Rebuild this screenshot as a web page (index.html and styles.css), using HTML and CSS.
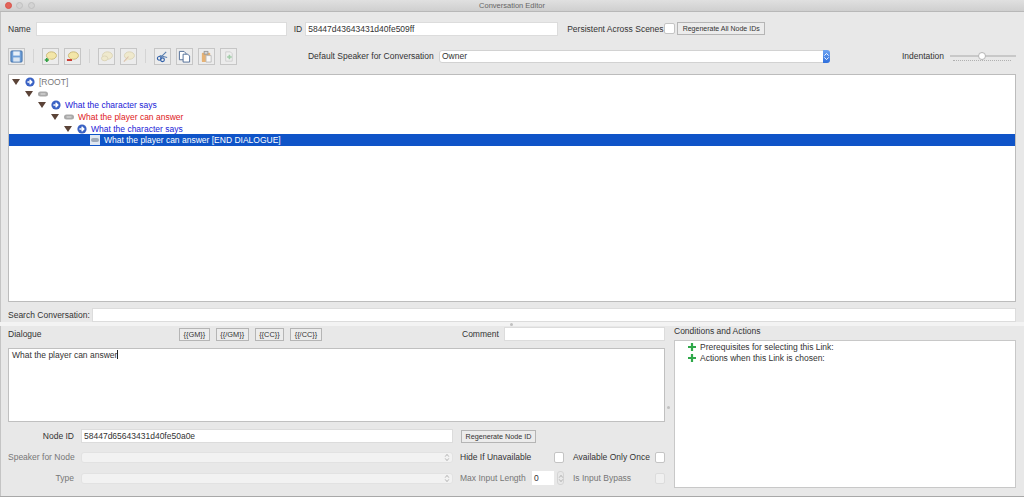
FILE: index.html
```html
<!DOCTYPE html>
<html lang="en">

<head>
    <meta charset="UTF-8">
    <title>Conversation Editor</title>
    <link rel="stylesheet" href="styles.css">
</head>

<body>
    <svg class="defs" width="0" height="0">
        <symbol id="go" viewBox="0 0 10 10">
            <circle cx="5" cy="5" r="4.6" fill="#3a62c4"/>
            <path d="M2.4 5h4M4.6 2.8 6.8 5 4.6 7.2" fill="none" stroke="#fff" stroke-width="1.4"/>
        </symbol>
        <symbol id="link" viewBox="0 0 10 10">
            <rect x="0" y="2.500" width="10" height="5" rx="2.500" fill="#a9a9a9"/>
            <path d="M2.500 5h5" stroke="#e4e4e4" stroke-width="1"/>
        </symbol>
        <symbol id="arrow" viewBox="0 0 8 6">
            <path d="M0 0h8L4 6z" fill="#5b4337"/>
        </symbol>
        <symbol id="plus" viewBox="0 0 8 8">
            <path d="M4 0v8M0 4h8" stroke="#2fa84a" stroke-width="2.2"/>
        </symbol>
        <symbol id="bubble" viewBox="0 0 14 14">
            <ellipse cx="8" cy="6" rx="5.4" ry="4" fill="#f3e6a8" stroke="#c9b878"/>
            <path d="M5 9 3.6 12 8 10z" fill="#f3e6a8"/>
        </symbol>
        <symbol id="updown" viewBox="0 0 6 10">
            <path d="M1 4 3 1.500 5 4M1 6 3 8.500 5 6" fill="none" stroke="#a5a5a5" stroke-width="0.900"/>
        </symbol>
    </svg>

    <header class="titlebar">
        <div class="lights"><span class="light close"></span><span class="light"></span><span class="light"></span></div>
        <div class="title">Conversation Editor</div>
    </header>

    <main class="editor">
        <div class="row-name">
            <label class="lbl-name">Name</label>
            <input class="field name-input" type="text">
            <label class="lbl-id">ID</label>
            <input class="field id-input" type="text" value="58447d43643431d40fe509ff">
            <label class="lbl-persist">Persistent Across Scenes</label>
            <span class="check"></span>
            <button class="btn btn-regen-all">Regenerate All Node IDs</button>
        </div>

        <div class="row-tools">
            <div class="tools">
                <button class="tool">
                    <svg viewBox="0 0 14 14"><rect x="1" y="1" width="12" height="12" rx="1" fill="#6f9fd8" stroke="#3f6da8"/><rect x="3.5" y="1.5" width="7" height="4.5" fill="#e9f0f8"/><rect x="3.5" y="8" width="7" height="4.5" fill="#dbe6f2"/></svg>
                </button>
                <span class="sep"></span>
                <button class="tool">
                    <svg viewBox="0 0 14 14"><use href="#bubble"/><path d="M3 8.5v4.5M.8 10.8h4.4" stroke="#2f9e44" stroke-width="1.8"/></svg>
                </button>
                <button class="tool">
                    <svg viewBox="0 0 14 14"><use href="#bubble"/><path d="M1 10.8h5.5" stroke="#c8362e" stroke-width="2"/></svg>
                </button>
                <span class="sep"></span>
                <button class="tool faded">
                    <svg viewBox="0 0 14 14"><use href="#bubble"/><ellipse cx="5" cy="9" rx="3.4" ry="2.6" fill="#f3e6a8" stroke="#c9b878"/></svg>
                </button>
                <button class="tool faded">
                    <svg viewBox="0 0 14 14"><use href="#bubble"/><path d="M2 12.5 7 7" stroke="#c88b5a" stroke-width="1.2"/></svg>
                </button>
                <span class="sep"></span>
                <button class="tool">
                    <svg viewBox="0 0 14 14"><path d="M11 2 5 8M12 8 4 6" stroke="#5a7fb0" stroke-width="1.2"/><circle cx="3.5" cy="9" r="2" fill="none" stroke="#2f5fa8" stroke-width="1.2"/><circle cx="7" cy="10.5" r="2" fill="none" stroke="#2f5fa8" stroke-width="1.2"/></svg>
                </button>
                <button class="tool">
                    <svg viewBox="0 0 14 14"><path d="M1.5 1.5h5l2 2v7h-7z" fill="#fff" stroke="#4d6a94"/><path d="M5.5 4.5h5l2 2v6.500h-7z" fill="#fff" stroke="#4d6a94"/></svg>
                </button>
                <button class="tool">
                    <svg viewBox="0 0 14 14"><rect x="2" y="3" width="9" height="10" rx="1" fill="#e6b274"/><rect x="4.500" y="1.500" width="4" height="3" fill="#d8d8d8" stroke="#999"/><path d="M6.500 6h5.500v7h-5.500z" fill="#f8f8f8" stroke="#bbb"/></svg>
                </button>
                <button class="tool faded">
                    <svg viewBox="0 0 14 14"><path d="M4 2h5l2 2v8h-7z" fill="#f4f4f4" stroke="#aaa"/><path d="M8 5v5M5.500 7.500h5" stroke="#49a85a" stroke-width="1.800"/></svg>
                </button>
            </div>
            <label class="lbl-speaker">Default Speaker for Conversation</label>
            <div class="select">
                <span>Owner</span>
                <span class="select-caret">
                    <svg viewBox="0 0 8 12"><path d="M1.500 5 4 2.500 6.500 5M1.500 7 4 9.500 6.500 7" fill="none" stroke="#fff" stroke-width="1.100"/></svg>
                </span>
            </div>
            <label class="lbl-indent">Indentation</label>
            <div class="slider"><span class="slider-knob"></span></div>
        </div>

        <div class="tree">
            <div class="node depth-0"><svg class="twist"><use href="#arrow"/></svg><svg class="ico"><use href="#go"/></svg><span class="txt-root">[ROOT]</span></div>
            <div class="node depth-1"><svg class="twist"><use href="#arrow"/></svg><svg class="ico"><use href="#link"/></svg></div>
            <div class="node depth-2"><svg class="twist"><use href="#arrow"/></svg><svg class="ico"><use href="#go"/></svg><span class="txt-npc">What the character says</span></div>
            <div class="node depth-3"><svg class="twist"><use href="#arrow"/></svg><svg class="ico"><use href="#link"/></svg><span class="txt-player">What the player can answer</span></div>
            <div class="node depth-4"><svg class="twist"><use href="#arrow"/></svg><svg class="ico"><use href="#go"/></svg><span class="txt-npc">What the character says</span></div>
            <div class="node depth-5 selected">
                <span class="twist"></span>
                <svg class="ico-end" viewBox="0 0 10 10"><rect width="10" height="10" fill="#dfe7f2"/><rect x="1" y="3" width="8" height="4" rx="2" fill="#9fa9b8"/></svg>
                <span>What the player can answer [END DIALOGUE]</span>
            </div>
        </div>

        <div class="row-search">
            <label>Search Conversation:</label>
            <input class="field search-input" type="text">
        </div>

        <div class="lower">
            <span class="grip grip-top"></span>
            <span class="grip grip-side"></span>
            <section class="left">
                <div class="row-dialogue">
                    <label class="lbl-dialogue">Dialogue</label>
                    <div class="markup">
                        <button class="btn">{{GM}}</button>
                        <button class="btn">{{/GM}}</button>
                        <button class="btn">{{CC}}</button>
                        <button class="btn">{{/CC}}</button>
                    </div>
                    <label class="lbl-comment">Comment</label>
                    <input class="field comment-input" type="text">
                </div>
                <div class="dialogue-text">What the player can answer<span class="caret"></span></div>
                <div class="props">
                    <label class="prop-label strong">Node ID</label>
                    <input class="field node-input" type="text" value="58447d65643431d40fe50a0e">
                    <button class="btn btn-regen">Regenerate Node ID</button>
                    <span></span><span></span><span></span>

                    <label class="prop-label">Speaker for Node</label>
                    <div class="select off"><svg class="updown"><use href="#updown"/></svg></div>
                    <label class="strong">Hide If Unavailable</label>
                    <span class="check"></span>
                    <label class="strong">Available Only Once</label>
                    <span class="check"></span>

                    <label class="prop-label">Type</label>
                    <div class="select off"><svg class="updown"><use href="#updown"/></svg></div>
                    <div class="max-input">
                        <label>Max Input Length</label>
                        <span class="num">0</span>
                        <span class="spin"><svg class="updown"><use href="#updown"/></svg></span>
                    </div>
                    <label class="dim">Is Input Bypass</label>
                    <span class="check off-check"></span>
                </div>
            </section>
            <section class="right">
                <label class="lbl-conditions">Conditions and Actions</label>
                <div class="conditions">
                    <div class="cond"><svg class="plus"><use href="#plus"/></svg>Prerequisites for selecting this Link:</div>
                    <div class="cond"><svg class="plus"><use href="#plus"/></svg>Actions when this Link is chosen:</div>
                </div>
            </section>
        </div>
    </main>
</body>

</html>
```

FILE: styles.css
```css
* {
    margin: 0;
    padding: 0;
    box-sizing: border-box;
    font-family: 'Liberation Sans', Arial, sans-serif;
}

html,
body {
    width: 1024px;
    height: 497px;
    overflow: hidden;
}

body {
    background-color: #e8e8e8;
    color: #333;
    font-size: 8.5px;
}

.defs {
    position: absolute;
}

.titlebar {
    height: 12px;
    background: linear-gradient(#e0e0e0, #cfcfcf);
    border-bottom: 1px solid #b8b8b8;
    display: grid;
    grid-template-columns: 1fr auto 1fr;
    align-items: center;
}

.lights {
    display: flex;
    gap: 4.500px;
    padding-left: 4.500px;
}

.light {
    width: 7px;
    height: 7px;
    border-radius: 50%;
    background-color: #d3d3d3;
    border: 1px solid #c0c0c0;
}

.light.close {
    background-color: #e2645a;
    border-color: #d9534a;
}

.title {
    color: #666;
    font-size: 7.5px;
}

.editor {
    height: 485px;
    padding: 9px 8px 0;
    border-bottom: 1px solid #a8a8a8;
    box-shadow: inset 1px 0 #c4c4c4;
}

.field {
    height: 14px;
    border: 1px solid #dcdcdc;
    background-color: #fff;
    color: #333;
    font-size: 8.5px;
    padding-left: 2px;
    outline: none;
}

.check {
    width: 11px;
    height: 11px;
    background-color: #fff;
    border: 1px solid #c4c4c4;
    border-radius: 2px;
}

.btn {
    height: 13px;
    background-color: #ececec;
    border: 1px solid #b5b5b5;
    color: #333;
    font-size: 7px;
}

.row-name {
    display: flex;
    align-items: center;
    height: 15px;
}

.name-input {
    width: 251px;
    margin-left: 5px;
}

.lbl-id {
    margin-left: 7px;
}

.id-input {
    width: 253px;
    margin-left: 3px;
}

.lbl-persist {
    margin-left: 9px;
    width: 97px;
    white-space: nowrap;
}

.btn-regen-all {
    width: 88px;
    margin-left: 2px;
}

.row-tools {
    display: flex;
    align-items: center;
    height: 18px;
    margin-top: 11px;
}

.tools {
    display: flex;
    align-items: center;
    gap: 5px;
    width: 300px;
}

.tool {
    width: 17px;
    height: 17px;
    background-color: #ececec;
    border: 1px solid #c6c6c6;
    padding: 1px;
}

.tool svg {
    display: block;
    width: 13px;
    height: 13px;
}

.tool.faded svg {
    opacity: 0.45;
}

.sep {
    width: 1px;
    height: 14px;
    margin: 0 3px;
    background-color: #d4d4d4;
}

.lbl-speaker {
    white-space: nowrap;
    width: 131px;
}

.select {
    display: flex;
    align-items: center;
    justify-content: space-between;
    width: 391px;
    height: 13px;
    background-color: #fff;
    border-radius: 3px;
    border: 1px solid #d2d2d2;
    padding-left: 2px;
}

.select-caret {
    width: 7px;
    height: 13px;
    margin-right: -1px;
    background: linear-gradient(#6ea4f2, #2f6fdc);
    border-radius: 0 3px 3px 0;
}

.select-caret svg {
    display: block;
    width: 7px;
    height: 13px;
}

.lbl-indent {
    margin-left: 72px;
}

.slider {
    position: relative;
    width: 66px;
    height: 2px;
    margin-left: 6px;
    background-color: #c8c8c8;
}

.slider::after {
    content: "";
    position: absolute;
    left: 3px;
    right: 5px;
    top: 5px;
    border-top: 1px dotted #b0b0b0;
}

.slider-knob {
    position: absolute;
    left: 28px;
    top: -3px;
    width: 8px;
    height: 8px;
    border-radius: 50%;
    background-color: #fff;
    border: 1px solid #b4b4b4;
}

.tree {
    height: 228px;
    margin-top: 9px;
    padding-top: 1px;
    background-color: #fff;
    border: 1px solid #bcbcbc;
    font-size: 8.5px;
}

.node {
    display: flex;
    align-items: center;
    height: 11.7px;
    white-space: nowrap;
}

.twist {
    flex: none;
    width: 8px;
    height: 6px;
    margin-right: 5px;
}

.ico {
    flex: none;
    width: 10px;
    height: 10px;
    margin-right: 4px;
}

.depth-0 {
    padding-left: 3px;
}

.depth-1 {
    padding-left: 16px;
}

.depth-2 {
    padding-left: 29px;
}

.depth-3 {
    padding-left: 42px;
}

.depth-4 {
    padding-left: 55px;
}

.depth-5 {
    padding-left: 68px;
}

.txt-root {
    color: #777;
}

.txt-npc {
    color: #1a1ad6;
}

.txt-player {
    color: #e0201c;
}

.selected {
    background-color: #0f54c8;
    color: #fff;
    height: 12px;
}

.ico-end {
    width: 10px;
    height: 10px;
    margin-right: 4px;
}

.row-search {
    display: flex;
    align-items: center;
    justify-content: space-between;
    margin-top: 6px;
}

.search-input {
    width: 924px;
}

.lower {
    position: relative;
    display: flex;
    justify-content: space-between;
    margin: 0 -8px;
    padding: 0 8px;
    border-top: 4px solid #f3f3f3;
}

.grip {
    position: absolute;
    width: 3px;
    height: 3px;
    border-radius: 50%;
    background-color: #c0c0c0;
}

.grip-top {
    left: 510px;
    top: -3px;
}

.grip-side {
    left: 667px;
    top: 80px;
}

.left {
    width: 657px;
    padding-top: 1px;
}

.row-dialogue {
    display: flex;
    align-items: center;
    height: 14px;
}

.lbl-dialogue {
    width: 171px;
}

.markup {
    display: flex;
    gap: 6px;
    width: 283px;
}

.markup .btn {
    padding: 0 3.500px;
    font-size: 7.400px;
}

.lbl-comment {
    width: 42px;
}

.comment-input {
    width: 161px;
}

.dialogue-text {
    height: 74px;
    margin-top: 7px;
    padding: 0 3px;
    background-color: #fff;
    border: 1px solid #c0c0c0;
    font-size: 8.5px;
    line-height: 12px;
}

.caret {
    display: inline-block;
    width: 1px;
    height: 9px;
    vertical-align: -1px;
    background-color: #222;
}

.props {
    display: grid;
    grid-template-columns: 73px 372px 101px 12px 89px 10px;
    grid-template-rows: 14px 14px 14px;
    row-gap: 7px;
    align-items: center;
    margin-top: 7px;
}

.prop-label {
    text-align: right;
    color: #777;
    padding-right: 7px;
    white-space: nowrap;
}

.strong {
    color: #333;
}

.dim {
    color: #777;
}

.node-input {
    width: 372px;
}

.btn-regen {
    width: 75px;
    margin-left: 8px;
    font-size: 7.200px;
}

.props label {
    white-space: nowrap;
}

.props .check {
    width: 10px;
}

.props > .select {
    width: 372px;
    height: 11px;
}

.select.off {
    justify-content: flex-end;
    background-color: #f2f2f2;
    border-color: #e2e2e2;
}

.updown {
    display: block;
    flex: none;
    width: 6px;
    height: 9px;
    margin-right: 2px;
}

.props > label:not(.prop-label) {
    padding-left: 7px;
}

.props > label.dim {
    grid-column: 5;
    padding-left: 7px;
}

.max-input {
    display: flex;
    align-items: center;
    padding-left: 7px;
    color: #777;
    white-space: nowrap;
    grid-column: 3 / 5;
}

.max-input label {
    width: 72px;
}

.num {
    width: 22px;
    height: 14px;
    padding: 2px;
    background-color: #fff;
    color: #333;
}

.spin {
    display: flex;
    align-items: center;
    justify-content: center;
    width: 7px;
    height: 14px;
    margin-left: 3px;
    border: 1px solid #d4d4d4;
    border-radius: 3px;
}

.spin .updown {
    margin: 0;
}

.off-check {
    background-color: #f0f0f0;
    border-color: #dcdcdc;
}

.right {
    width: 342px;
    padding-top: 0;
}

.lbl-conditions {
    display: block;
    height: 14px;
    line-height: 10px;
}

.conditions {
    height: 148px;
    padding-left: 13px;
    background-color: #fff;
    border: 1px solid #c8c8c8;
}

.cond {
    display: flex;
    align-items: center;
    height: 11px;
}

.plus {
    width: 8px;
    height: 8px;
    margin-right: 4px;
}
```
